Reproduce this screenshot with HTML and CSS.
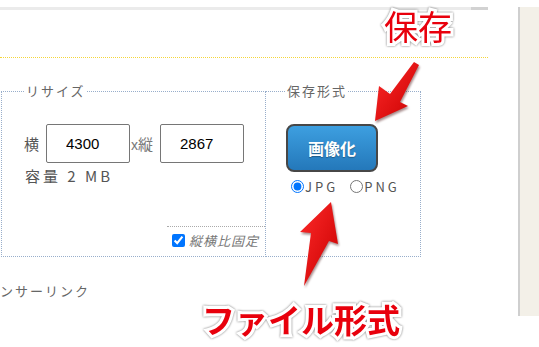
FILE: index.html
```html
<!DOCTYPE html>
<html lang="ja">
<head>
<meta charset="UTF-8">
<meta name="viewport" content="width=device-width, initial-scale=1.0">
<title>画像変換</title>
<link rel="stylesheet" href="styles.css">
</head>
<body>
<div class="page">
    <div class="main">
        <div class="topbar"><span class="thumb"></span></div>
        <div class="head"></div>
        <div class="tools">
            <fieldset class="box resize">
                <legend>リサイズ</legend>
                <div class="box-body">
                    <div class="size-row">
                        <span class="lbl">横</span>
                        <input class="num" type="text" value="4300">
                        <span class="lbl x"><span class="times">x</span>縦</span>
                        <input class="num" type="text" value="2867">
                    </div>
                    <div class="info">容量 2 MB</div>
                    <label class="lock"><input type="checkbox" checked><span>縦横比固定</span></label>
                </div>
            </fieldset>
            <fieldset class="box format">
                <legend>保存形式</legend>
                <div class="box-body">
                    <button class="save-btn">画像化</button>
                    <div class="types">
                        <label><input type="radio" name="fmt" checked>JPG</label>
                        <label><input type="radio" name="fmt">PNG</label>
                    </div>
                </div>
            </fieldset>
        </div>
        <p class="sponsor">ンサーリンク</p>
    </div>
    <div class="side"></div>
</div>

<div class="notes">
    <svg class="arrows" width="539" height="347" viewBox="0 0 539 347">
        <defs>
            <linearGradient id="red" x1="0" y1="0" x2="1" y2="1">
                <stop offset="0" stop-color="#ff2a2a"/>
                <stop offset="1" stop-color="#c80000"/>
            </linearGradient>
        </defs>
        <polygon points="375,121 379,86 390,94 414,62 419,65 400,102 408,106" fill="url(#red)"/>
        <polygon points="331,202 338,244 329,241 304,286 311,233 300,232" fill="url(#red)"/>
    </svg>
    <span class="tag tag-save">保存</span>
    <span class="tag tag-type">ファイル形式</span>
</div>
</body>
</html>
```

FILE: styles.css
```css
body {
    margin: 0;
    background-color: #fff;
    font-family: "Noto Sans CJK JP", "Liberation Sans", sans-serif;
    color: #555;
}
.page {
    display: flex;
    width: 539px;
    height: 347px;
    overflow: hidden;
}
.main {
    width: 488px;
}
.topbar {
    margin-top: 7px;
    height: 3px;
    background-color: #ebebeb;
    display: flex;
    justify-content: flex-end;
}
.topbar .thumb {
    width: 17px;
    background-color: #d2d2d2;
}
.head {
    height: 47px;
    border-bottom: 1px dotted #f5d63a;
}
.tools {
    display: flex;
    margin-top: 24px;
    padding-left: 1px;
}
.box {
    margin: 0;
    padding: 0;
    border: 1px dotted #98aecb;
    min-width: 0;
}
.box legend {
    font-size: 13px;
    line-height: 18px;
    letter-spacing: 2px;
    color: #666;
    padding: 0 1px;
}
.resize {
    width: 265px;
    box-sizing: border-box;
}
.resize legend {
    margin-left: 23px;
}
.format {
    width: 156px;
    box-sizing: border-box;
    margin-left: -1px;
}
.format legend {
    margin-left: 20px;
}
.box-body {
    height: 156px;
    display: flex;
    flex-direction: column;
}
.size-row {
    display: flex;
    align-items: center;
    margin-top: 24px;
    padding-left: 22px;
}
.lbl {
    font-size: 15px;
}
.lbl.x {
    margin: 0 7px 0 1px;
    color: #777;
}
.times {
    font-family: "Liberation Sans", sans-serif;
    font-size: 14px;
}
.num {
    width: 84px;
    height: 39px;
    box-sizing: border-box;
    margin-left: 7px;
    padding: 0 0 0 19px;
    border: 1px solid #767676;
    border-radius: 2px;
    font-family: "Liberation Sans", sans-serif;
    font-size: 15px;
    color: #000;
}
.size-row .x + .num {
    margin-left: 0;
}
.info {
    margin-top: 2px;
    padding-left: 23px;
    font-size: 15px;
    letter-spacing: 3px;
}
.lock {
    margin-top: auto;
    align-self: flex-end;
    width: 98px;
    box-sizing: border-box;
    border-top: 1px dotted #aaa;
    padding: 4px 0 6px 5px;
    display: flex;
    align-items: center;
    font-size: 13px;
    font-style: italic;
    letter-spacing: 1px;
    color: #777;
}
.lock input {
    margin: 0 4px 0 0;
    width: 13px;
    height: 13px;
}
.save-btn {
    margin: 24px 0 0 20px;
    width: 92px;
    height: 48px;
    border: 2px solid #474747;
    border-radius: 8px;
    background: linear-gradient(#3d9fe0, #2478ba);
    color: #fff;
    font-family: "Noto Sans CJK JP", sans-serif;
    font-size: 16px;
    font-weight: bold;
    text-shadow: 0 1px 1px rgba(0,0,0,0.3);
}
.types {
    display: flex;
    gap: 12px;
    margin-top: 5px;
    padding-left: 25px;
    font-family: "Noto Sans CJK JP", sans-serif;
    font-size: 13px;
    letter-spacing: 3px;
    color: #555;
}
.types label {
    display: flex;
    align-items: center;
}
.types input {
    margin: 0 1px 0 0;
}
.sponsor {
    margin: 24px 0 0;
    font-size: 13px;
    letter-spacing: 2px;
    color: #666;
}
.side {
    margin: 7px 0 0 30px;
    width: 19px;
    height: 309px;
    border-left: 2px solid #cfcfcf;
    background-color: #f3f0e8;
}
.notes .arrows {
    position: absolute;
    left: 0;
    top: 0;
    filter: drop-shadow(1px 2px 1px rgba(60,0,0,0.45));
}
.tag {
    position: absolute;
    color: #e8000c;
    line-height: 1;
    -webkit-text-stroke: 6px #fff;
    paint-order: stroke fill;
    filter: drop-shadow(0 0 1px #777);
}
.tag-save {
    left: 384px;
    top: 9px;
    font-size: 34px;
    font-weight: 400;
}
.tag-type {
    left: 202px;
    top: 303px;
    font-size: 33px;
    font-weight: bold;
}
```
